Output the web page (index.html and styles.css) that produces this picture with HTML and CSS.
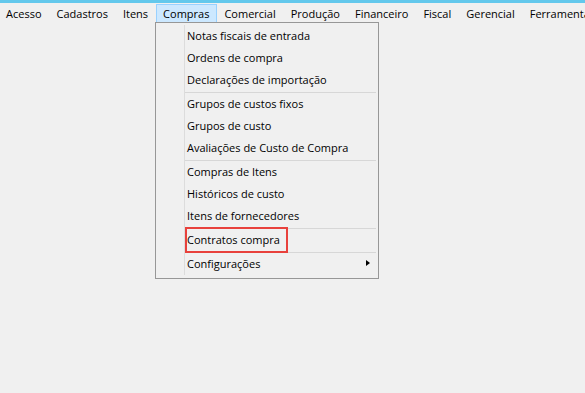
FILE: index.html
```html
<!DOCTYPE html>
<html lang="pt-BR">
<head>
    <meta charset="UTF-8">
    <title>Compras</title>
    <link rel="stylesheet" href="styles.css">
</head>
<body>
    <div class="title-strip"></div>
    <nav class="menubar">
        <span class="menubar-item">Acesso</span>
        <span class="menubar-item">Cadastros</span>
        <span class="menubar-item">Itens</span>
        <span class="menubar-item active">Compras</span>
        <span class="menubar-item">Comercial</span>
        <span class="menubar-item">Produção</span>
        <span class="menubar-item">Financeiro</span>
        <span class="menubar-item">Fiscal</span>
        <span class="menubar-item">Gerencial</span>
        <span class="menubar-item">Ferramentas</span>
    </nav>

    <ul class="dropdown">
        <li class="menu-item">Notas fiscais de entrada</li>
        <li class="menu-item">Ordens de compra</li>
        <li class="menu-item">Declarações de importação</li>
        <li class="separator"></li>
        <li class="menu-item">Grupos de custos fixos</li>
        <li class="menu-item">Grupos de custo</li>
        <li class="menu-item">Avaliações de Custo de Compra</li>
        <li class="separator"></li>
        <li class="menu-item">Compras de Itens</li>
        <li class="menu-item">Históricos de custo</li>
        <li class="menu-item">Itens de fornecedores</li>
        <li class="separator"></li>
        <li class="menu-item"><span class="highlight">Contratos compra</span></li>
        <li class="separator"></li>
        <li class="menu-item submenu">Configurações <span class="arrow"></span></li>
    </ul>
</body>
</html>
```

FILE: styles.css
```css
html, body {
    height: 100%;
}
body {
    margin: 0;
    background-color: #f0f0f0;
    font-family: "Open Sans", "Noto Sans", sans-serif;
    font-size: 11px;
    color: #000;
    overflow: hidden;
}
.title-strip {
    height: 3px;
    background-color: #63c8ec;
}
.menubar {
    display: flex;
    height: 20px;
    padding-top: 1px;
    margin-left: -1px;
    white-space: nowrap;
}
.menubar-item {
    padding: 0 7px 0 6px;
    height: 17px;
    line-height: 17px;
    border: 1px solid transparent;
}
.menubar-item.active {
    background-color: #cce8ff;
    border-color: #99d1ff;
}
.dropdown {
    position: absolute;
    left: 155px;
    top: 22px;
    width: 218px;
    margin: 0;
    padding: 2px 2px 3px;
    list-style: none;
    border: 1px solid #979797;
    background-color: #f0f0f0;
    background-image: linear-gradient(to right, transparent 26px, #dcdcdc 26px, #dcdcdc 27px, transparent 27px);
    background-origin: content-box;
    background-clip: content-box;
}
.menu-item {
    height: 22px;
    line-height: 22px;
    padding-left: 29px;
    position: relative;
}
.separator {
    height: 0;
    margin: 1px 0 0 27px;
    border-top: 1px solid #d7d7d7;
}
.highlight {
    display: inline-block;
    margin: -2px 0 0 -2px;
    padding: 0 6px 0 0;
    height: 22px;
    line-height: 22px;
    border: 2px solid #e8413c;
    vertical-align: top;
}
.arrow {
    position: absolute;
    right: 6px;
    top: 7px;
    border-left: 4px solid #000;
    border-top: 3px solid transparent;
    border-bottom: 3px solid transparent;
}
```
